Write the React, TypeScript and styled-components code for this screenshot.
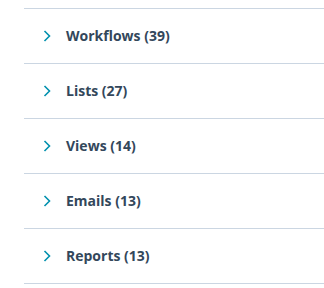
import { createGlobalStyle } from 'styled-components'
import styled from 'styled-components'

const GlobalStyle = createGlobalStyle`
  html, body {
    margin: 0;
    background: #ffffff;
  }
`

const sections = [
  { title: 'Workflows', count: 39 },
  { title: 'Lists', count: 27 },
  { title: 'Views', count: 14 },
  { title: 'Emails', count: 13 },
  { title: 'Reports', count: 13 },
]

const Wrapper = styled.div`
  width: 324px;
  height: 288px;
  padding: 8px 0 0 24px;
  box-sizing: border-box;
  overflow: hidden;
`

const List = styled.ul`
  list-style: none;
  margin: 0;
  padding: 0;
  border-bottom: 1px solid #cbd6e2;
`

const Row = styled.li`
  display: flex;
  align-items: center;
  height: 54px;
  border-top: 1px solid #cbd6e2;
  padding-left: 19px;
  font-family: 'Open Sans', 'Noto Sans', sans-serif;
  font-size: 14px;
  font-weight: 700;
  color: #33475b;
`

const Chevron = styled.svg`
  width: 8px;
  height: 12px;
  margin-right: 15px;
  flex-shrink: 0;
`

const Title = styled.span`
  line-height: 1;
`

const Section = ({ title, count }: { title: string; count: number }) => (
  <Row>
    <Chevron viewBox="0 0 8 12">
      <path d="M1.5 1 L6.5 6 L1.5 11" fill="none" stroke="#0091ae" strokeWidth="1.6" />
    </Chevron>
    <Title>
      {title} ({count})
    </Title>
  </Row>
)

export default function App() {
  return (
    <Wrapper>
      <GlobalStyle />
      <List>
        {sections.map((s) => (
          <Section key={s.title} title={s.title} count={s.count} />
        ))}
      </List>
    </Wrapper>
  )
}
